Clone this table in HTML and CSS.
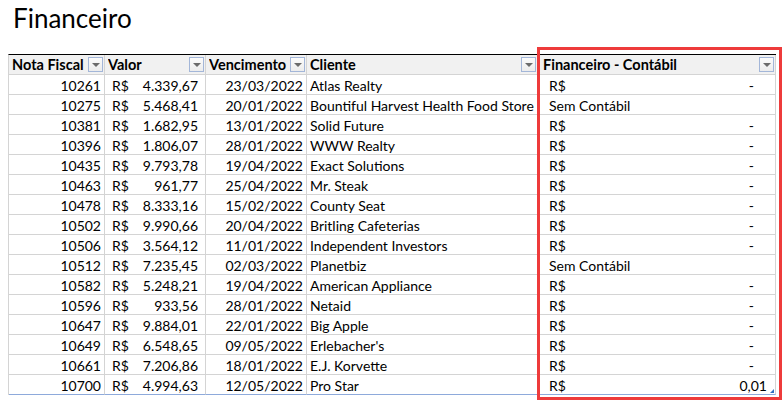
FILE: index.html
```html
<!DOCTYPE html>
<html lang="pt-BR">
<head>
<meta charset="utf-8">
<title>Financeiro</title>
<link rel="stylesheet" href="styles.css">
</head>
<body>
<div class="page">
  <h1 class="title">Financeiro</h1>
  <div class="sheet">
    <div class="row head">
      <div class="cell"><span class="label">Nota Fiscal</span><span class="filter"></span></div>
      <div class="cell"><span class="label">Valor</span><span class="filter"></span></div>
      <div class="cell"><span class="label">Vencimento</span><span class="filter"></span></div>
      <div class="cell"><span class="label">Cliente</span><span class="filter"></span></div>
      <div class="cell"><span class="label">Financeiro - Contábil</span><span class="filter"></span></div>
    </div>
    <div class="row"><div class="cell num">10261</div><div class="cell acc"><span>R$</span><span>4.339,67</span></div><div class="cell num">23/03/2022</div><div class="cell">Atlas Realty</div><div class="cell fc"><span>R$</span><span class="dash">-</span></div></div>
    <div class="row"><div class="cell num">10275</div><div class="cell acc"><span>R$</span><span>5.468,41</span></div><div class="cell num">20/01/2022</div><div class="cell">Bountiful Harvest Health Food Store</div><div class="cell fc"><span>Sem Contábil</span></div></div>
    <div class="row"><div class="cell num">10381</div><div class="cell acc"><span>R$</span><span>1.682,95</span></div><div class="cell num">13/01/2022</div><div class="cell">Solid Future</div><div class="cell fc"><span>R$</span><span class="dash">-</span></div></div>
    <div class="row"><div class="cell num">10396</div><div class="cell acc"><span>R$</span><span>1.806,07</span></div><div class="cell num">28/01/2022</div><div class="cell">WWW Realty</div><div class="cell fc"><span>R$</span><span class="dash">-</span></div></div>
    <div class="row"><div class="cell num">10435</div><div class="cell acc"><span>R$</span><span>9.793,78</span></div><div class="cell num">19/04/2022</div><div class="cell">Exact Solutions</div><div class="cell fc"><span>R$</span><span class="dash">-</span></div></div>
    <div class="row"><div class="cell num">10463</div><div class="cell acc"><span>R$</span><span>961,77</span></div><div class="cell num">25/04/2022</div><div class="cell">Mr. Steak</div><div class="cell fc"><span>R$</span><span class="dash">-</span></div></div>
    <div class="row"><div class="cell num">10478</div><div class="cell acc"><span>R$</span><span>8.333,16</span></div><div class="cell num">15/02/2022</div><div class="cell">County Seat</div><div class="cell fc"><span>R$</span><span class="dash">-</span></div></div>
    <div class="row"><div class="cell num">10502</div><div class="cell acc"><span>R$</span><span>9.990,66</span></div><div class="cell num">20/04/2022</div><div class="cell">Britling Cafeterias</div><div class="cell fc"><span>R$</span><span class="dash">-</span></div></div>
    <div class="row"><div class="cell num">10506</div><div class="cell acc"><span>R$</span><span>3.564,12</span></div><div class="cell num">11/01/2022</div><div class="cell">Independent Investors</div><div class="cell fc"><span>R$</span><span class="dash">-</span></div></div>
    <div class="row"><div class="cell num">10512</div><div class="cell acc"><span>R$</span><span>7.235,45</span></div><div class="cell num">02/03/2022</div><div class="cell">Planetbiz</div><div class="cell fc"><span>Sem Contábil</span></div></div>
    <div class="row"><div class="cell num">10582</div><div class="cell acc"><span>R$</span><span>5.248,21</span></div><div class="cell num">19/04/2022</div><div class="cell">American Appliance</div><div class="cell fc"><span>R$</span><span class="dash">-</span></div></div>
    <div class="row"><div class="cell num">10596</div><div class="cell acc"><span>R$</span><span>933,56</span></div><div class="cell num">28/01/2022</div><div class="cell">Netaid</div><div class="cell fc"><span>R$</span><span class="dash">-</span></div></div>
    <div class="row"><div class="cell num">10647</div><div class="cell acc"><span>R$</span><span>9.884,01</span></div><div class="cell num">22/01/2022</div><div class="cell">Big Apple</div><div class="cell fc"><span>R$</span><span class="dash">-</span></div></div>
    <div class="row"><div class="cell num">10649</div><div class="cell acc"><span>R$</span><span>6.548,65</span></div><div class="cell num">09/05/2022</div><div class="cell">Erlebacher's</div><div class="cell fc"><span>R$</span><span class="dash">-</span></div></div>
    <div class="row"><div class="cell num">10661</div><div class="cell acc"><span>R$</span><span>7.206,86</span></div><div class="cell num">18/01/2022</div><div class="cell">E.J. Korvette</div><div class="cell fc"><span>R$</span><span class="dash">-</span></div></div>
    <div class="row last"><div class="cell num">10700</div><div class="cell acc"><span>R$</span><span>4.994,63</span></div><div class="cell num">12/05/2022</div><div class="cell">Pro Star</div><div class="cell fc"><span>R$</span><span>0,01</span><span class="handle"></span></div></div>
  </div>
  <div class="highlight"></div>
</div>
</body>
</html>
```
FILE: styles.css
```css
* { box-sizing: border-box; }
html, body { margin: 0; padding: 0; background: #ffffff; }
body {
  font-family: Lato, "Open Sans", "Liberation Sans", sans-serif;
  font-size: 14px;
  color: #000000;
}
.page {
  position: relative;
  width: 782px;
  height: 400px;
  overflow: hidden;
}
.title {
  margin: 0;
  height: 54px;
  padding: 2px 0 0 13px;
  font-weight: 400;
  font-size: 26px;
  line-height: 32px;
}
.sheet {
  margin-left: 8px;
  width: 768px;
  border-top: 1px solid #000000;
  border-left: 1px solid #d4d4d4;
}
.row {
  display: grid;
  grid-template-columns: 96px 101px 101px 231px 238px;
  height: 20px;
}
.cell {
  height: 20px;
  line-height: 18px;
  padding: 2px 3px 0 3px;
  border-right: 1px solid #d4d4d4;
  border-bottom: 1px solid #d4d4d4;
  white-space: nowrap;
  overflow: hidden;
  position: relative;
}
.head .cell {
  background: #f1f1f1;
  font-weight: 700;
  font-size: 14.5px;
  display: flex;
  align-items: center;
  padding: 0 1px 0 3px;
}
.head .label { flex: 1; overflow: hidden; padding-top: 1px; }
.filter {
  flex: none;
  width: 15px;
  height: 15px;
  border: 1px solid #a3b6d8;
  background: linear-gradient(#fbfbfb, #ececec);
  position: relative;
}
.filter::after {
  content: "";
  position: absolute;
  left: 3px;
  top: 5px;
  border-left: 4px solid transparent;
  border-right: 4px solid transparent;
  border-top: 4px solid #6b6b6b;
}
.head .cell:nth-child(5) { padding-left: 5px; }
.num { text-align: right; }
.acc {
  display: flex;
  justify-content: space-between;
  padding: 2px 7px 0 7px;
}
.fc {
  display: flex;
  justify-content: space-between;
  padding: 2px 8px 0 11px;
}
.fc .dash { padding-right: 13px; }
.last .cell { border-bottom: 1px solid #8eaadb; }
.handle {
  position: absolute;
  right: 1px;
  bottom: 1px;
  width: 4px;
  height: 4px;
  background: #2f6fc0;
  clip-path: polygon(100% 0, 100% 100%, 0 100%);
}
.highlight {
  position: absolute;
  left: 537px;
  top: 47px;
  width: 245px;
  height: 353px;
  border: 3px solid #ee3b3b;
  pointer-events: none;
}
```
